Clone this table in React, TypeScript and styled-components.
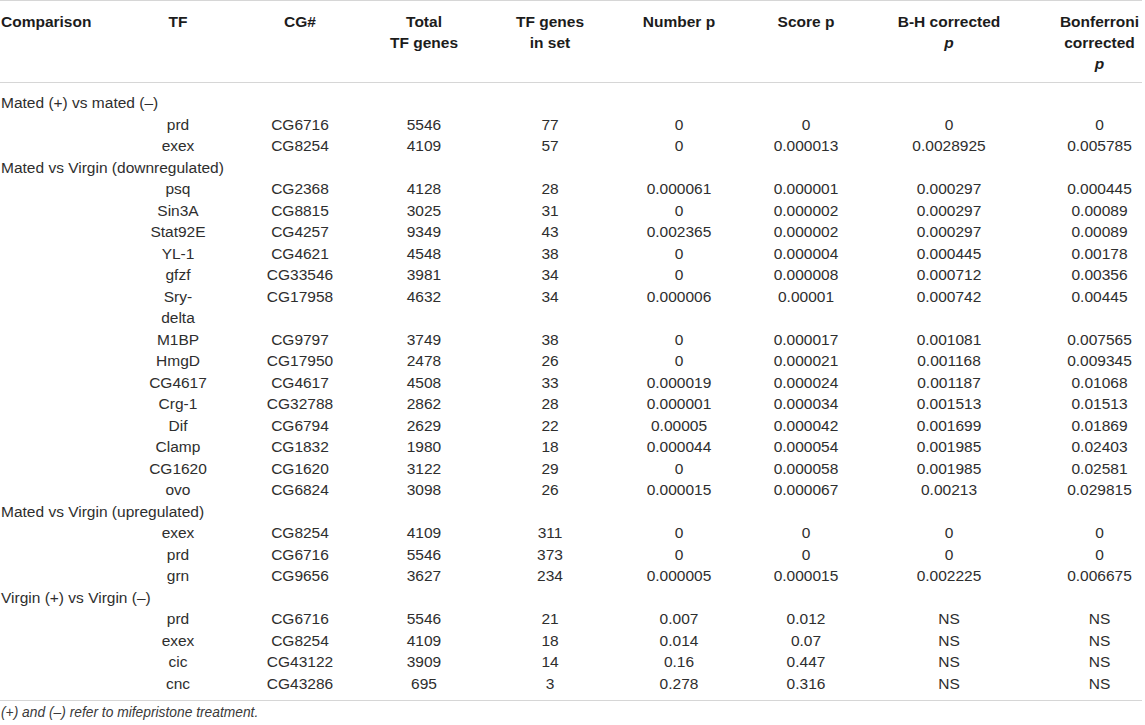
import React from 'react';
import styled, { createGlobalStyle } from 'styled-components';

const GlobalStyle = createGlobalStyle`
  html, body {
    margin: 0;
    padding: 0;
    background: #ffffff;
  }
  body {
    font-family: "Liberation Sans", Arial, Helvetica, sans-serif;
    color: #2e2e2e;
  }
`;

const Wrapper = styled.div`
  width: 1142px;
`;

const Table = styled.table`
  width: 1142px;
  table-layout: fixed;
  border-collapse: collapse;
  border-top: 1px solid #d6d6d6;
  border-bottom: 1px solid #d6d6d6;
  font-family: "Liberation Sans", Arial, Helvetica, sans-serif;
  font-size: 15.5px;
  color: #2e2e2e;

  tbody tr:first-child > td {
    padding-top: 9px;
  }
  tbody tr:last-child > td {
    padding-bottom: 6px;
  }
`;

const HeadRow = styled.tr`
  border-bottom: 1px solid #d6d6d6;
`;

const Th = styled.th<{ $align?: string; $pad?: string }>`
  vertical-align: top;
  font-weight: 700;
  color: #1c1c1c;
  line-height: 21px;
  text-align: ${(p) => p.$align || 'center'};
  padding: 10px ${(p) => p.$pad || '0'} 8px;
`;

const Td = styled.td<{ $pad?: string }>`
  line-height: 21.5px;
  text-align: center;
  padding: 0 ${(p) => p.$pad || '0'};
  vertical-align: top;
`;

const GroupCell = styled.td`
  line-height: 21.5px;
  text-align: left;
  padding: 0 0 0 1px;
  white-space: nowrap;
`;

const Italic = styled.i`
  font-style: italic;
`;

const Footnote = styled.p`
  margin: 1px 0 0;
  padding-left: 1px;
  font-size: 13.8px;
  line-height: 22px;
  font-style: italic;
  color: #3a3a3a;
`;

// column widths; TF keeps a narrow box so "Sry-delta" wraps as in the source
const widths = [125, 106, 138, 110, 142, 116, 138, 148, 119];
const TF_PAD = '23px';
const LAST_PAD_LEFT = 34;

type Row = [string, string, string, string, string, string, string, string];

const groups: { title: string; rows: Row[] }[] = [
  {
    title: 'Mated (+) vs mated (–)',
    rows: [
      ['prd', 'CG6716', '5546', '77', '0', '0', '0', '0'],
      ['exex', 'CG8254', '4109', '57', '0', '0.000013', '0.0028925', '0.005785'],
    ],
  },
  {
    title: 'Mated vs Virgin (downregulated)',
    rows: [
      ['psq', 'CG2368', '4128', '28', '0.000061', '0.000001', '0.000297', '0.000445'],
      ['Sin3A', 'CG8815', '3025', '31', '0', '0.000002', '0.000297', '0.00089'],
      ['Stat92E', 'CG4257', '9349', '43', '0.002365', '0.000002', '0.000297', '0.00089'],
      ['YL-1', 'CG4621', '4548', '38', '0', '0.000004', '0.000445', '0.00178'],
      ['gfzf', 'CG33546', '3981', '34', '0', '0.000008', '0.000712', '0.00356'],
      ['Sry-delta', 'CG17958', '4632', '34', '0.000006', '0.00001', '0.000742', '0.00445'],
      ['M1BP', 'CG9797', '3749', '38', '0', '0.000017', '0.001081', '0.007565'],
      ['HmgD', 'CG17950', '2478', '26', '0', '0.000021', '0.001168', '0.009345'],
      ['CG4617', 'CG4617', '4508', '33', '0.000019', '0.000024', '0.001187', '0.01068'],
      ['Crg-1', 'CG32788', '2862', '28', '0.000001', '0.000034', '0.001513', '0.01513'],
      ['Dif', 'CG6794', '2629', '22', '0.00005', '0.000042', '0.001699', '0.01869'],
      ['Clamp', 'CG1832', '1980', '18', '0.000044', '0.000054', '0.001985', '0.02403'],
      ['CG1620', 'CG1620', '3122', '29', '0', '0.000058', '0.001985', '0.02581'],
      ['ovo', 'CG6824', '3098', '26', '0.000015', '0.000067', '0.00213', '0.029815'],
    ],
  },
  {
    title: 'Mated vs Virgin (upregulated)',
    rows: [
      ['exex', 'CG8254', '4109', '311', '0', '0', '0', '0'],
      ['prd', 'CG6716', '5546', '373', '0', '0', '0', '0'],
      ['grn', 'CG9656', '3627', '234', '0.000005', '0.000015', '0.002225', '0.006675'],
    ],
  },
  {
    title: 'Virgin (+) vs Virgin (–)',
    rows: [
      ['prd', 'CG6716', '5546', '21', '0.007', '0.012', 'NS', 'NS'],
      ['exex', 'CG8254', '4109', '18', '0.014', '0.07', 'NS', 'NS'],
      ['cic', 'CG43122', '3909', '14', '0.16', '0.447', 'NS', 'NS'],
      ['cnc', 'CG43286', '695', '3', '0.278', '0.316', 'NS', 'NS'],
    ],
  },
];

const App: React.FC = () => {
  return (
    <Wrapper>
      <GlobalStyle />
      <Table>
        <colgroup>
          {widths.map((w, i) => (
            <col key={i} style={{ width: w }} />
          ))}
        </colgroup>
        <thead>
          <HeadRow>
            <Th $align="left" $pad="1px">Comparison</Th>
            <Th $pad={TF_PAD}>TF</Th>
            <Th>CG#</Th>
            <Th>
              Total
              <br />
              TF genes
            </Th>
            <Th>
              TF genes
              <br />
              in set
            </Th>
            <Th>Number p</Th>
            <Th>Score p</Th>
            <Th>
              B-H corrected
              <br />
              <Italic>p</Italic>
            </Th>
            <Th style={{ paddingLeft: LAST_PAD_LEFT }}>
              Bonferroni
              <br />
              corrected
              <br />
              <Italic>p</Italic>
            </Th>
          </HeadRow>
        </thead>
        <tbody>
          {groups.map((g) => (
            <React.Fragment key={g.title}>
              <tr>
                <GroupCell colSpan={9}>{g.title}</GroupCell>
              </tr>
              {g.rows.map((r, i) => (
                <tr key={g.title + i}>
                  <Td />
                  <Td $pad={TF_PAD}>{r[0]}</Td>
                  <Td>{r[1]}</Td>
                  <Td>{r[2]}</Td>
                  <Td>{r[3]}</Td>
                  <Td>{r[4]}</Td>
                  <Td>{r[5]}</Td>
                  <Td>{r[6]}</Td>
                  <Td style={{ paddingLeft: LAST_PAD_LEFT }}>{r[7]}</Td>
                </tr>
              ))}
            </React.Fragment>
          ))}
        </tbody>
      </Table>
      <Footnote>(+) and (–) refer to mifepristone treatment.</Footnote>
    </Wrapper>
  );
};

export default App;
